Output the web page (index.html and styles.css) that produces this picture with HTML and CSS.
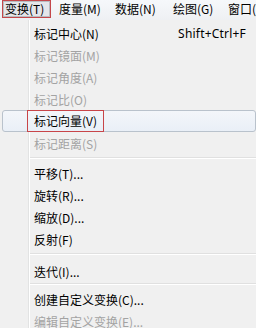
FILE: index.html
```html
<!DOCTYPE html>
<html lang="zh">
<head>
<meta charset="utf-8">
<link rel="stylesheet" href="styles.css">
</head>
<body>
<div class="screen">
  <div class="menubar">
    <span class="bar-item pressed">变换(T)</span>
    <span class="bar-item">度量(M)</span>
    <span class="bar-item">数据(N)</span>
    <span class="bar-item">绘图(G)</span>
    <span class="bar-item">窗口(W)</span>
  </div>
  <div class="menu">
    <div class="row"><span class="label">标记中心(N)</span><span class="key">Shift+Ctrl+F</span></div>
    <div class="row disabled"><span class="label">标记镜面(M)</span></div>
    <div class="row disabled"><span class="label">标记角度(A)</span></div>
    <div class="row disabled"><span class="label">标记比(O)</span></div>
    <div class="row hover"><span class="label"><span class="mark">标记向量(V)</span></span></div>
    <div class="row disabled"><span class="label">标记距离(S)</span></div>
    <div class="sep"></div>
    <div class="row"><span class="label">平移(T)...</span></div>
    <div class="row"><span class="label">旋转(R)...</span></div>
    <div class="row"><span class="label">缩放(D)...</span></div>
    <div class="row"><span class="label">反射(F)</span></div>
    <div class="sep sep-wide"></div>
    <div class="row"><span class="label">迭代(I)...</span></div>
    <div class="sep sep-narrow"></div>
    <div class="row"><span class="label">创建自定义变换(C)...</span></div>
    <div class="row disabled"><span class="label">编辑自定义变换(E)...</span></div>
  </div>
</div>
</body>
</html>
```

FILE: styles.css
```css
html, body {
  margin: 0;
  padding: 0;
}
body {
  width: 256px;
  height: 328px;
  overflow: hidden;
  background: #f0f0f0;
  font-family: "Noto Sans CJK SC", "Noto Sans", sans-serif;
  font-size: 12px;
  color: #000;
}
.screen {
  width: 256px;
  height: 328px;
  display: flex;
  flex-direction: column;
}
.menubar {
  flex-shrink: 0;
  height: 20px;
  display: grid;
  grid-template-columns: 54px 56px 58px 55px 1fr;
  padding-left: 2px;
  background: linear-gradient(#f6f8fb, #eef0f3);
  white-space: nowrap;
}
.bar-item {
  height: 18px;
  line-height: 18px;
  padding-left: 3px;
  box-sizing: border-box;
}
.bar-item.pressed {
  width: 49px;
  border: 1px solid #c4474b;
  box-shadow: inset 0 0 0 1px #b9bcc0;
  background: #e4e6ea;
  padding-left: 2px;
  line-height: 16px;
}
.menu {
  flex: 1 0 auto;
  padding-top: 2px;
  background:
    linear-gradient(to right, transparent 28px, #e2e3e3 28px, #e2e3e3 29px, #ffffff 29px, #ffffff 30px, transparent 30px),
    #f0f0f0;
}
.row {
  height: 22px;
  display: flex;
  align-items: center;
  justify-content: space-between;
  padding: 0 10px 0 34px;
  white-space: nowrap;
  box-sizing: border-box;
}
.row.disabled {
  color: #a3a3a3;
}
.row.hover {
  margin: 0 0 0 2px;
  padding-left: 24px;
  border: 1px solid #b9c2cc;
  border-radius: 3px;
  background: linear-gradient(#f3f6fa, #e9eff7);
  height: 22px;
}
.mark {
  display: inline-block;
  height: 22px;
  line-height: 20px;
  padding: 0 6px;
  border: 1px solid #c84549;
  box-sizing: border-box;
  margin-top: -1px;
}
.sep {
  height: 8px;
  margin-left: 30px;
  background: linear-gradient(transparent 3px, #e0e0e0 3px, #e0e0e0 4px, #ffffff 4px, #ffffff 5px, transparent 5px);
}
.sep.sep-wide {
  height: 10px;
}
.sep.sep-narrow {
  height: 6px;
  background: linear-gradient(transparent 1px, #e0e0e0 1px, #e0e0e0 2px, #ffffff 2px, #ffffff 3px, transparent 3px);
}
.key {
  font-family: "Noto Sans", sans-serif;
  font-size: 12px;
  letter-spacing: 0.2px;
}
```
